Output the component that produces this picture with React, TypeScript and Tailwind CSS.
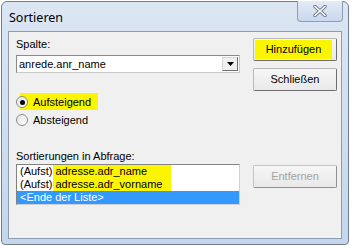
import React from "react";

function Btn({ label, disabled, mark }: { label: string; disabled?: boolean; mark?: boolean }) {
  return (
    <div
      className={`h-[23px] w-[84px] flex rounded-[2px] border ${
        disabled
          ? "border-[#c4c4c4] border-r-[#8f8f8f] border-b-[#8f8f8f] text-[#a3a3a3]"
          : "border-[#b8b8b8] border-r-[#6e6e6e] border-b-[#6e6e6e] text-black"
      } bg-gradient-to-b from-[#f6f6f6] to-[#e9e9e9]`}
    >
      {mark ? (
        <div className="ml-[1px] mr-[4px] my-[1px] flex-1 bg-[#fbf500] flex items-center justify-center">{label}</div>
      ) : (
        <div className="flex-1 flex items-center justify-center">{label}</div>
      )}
    </div>
  );
}

function Radio({ label, checked }: { label: string; checked?: boolean }) {
  return (
    <div className="relative h-[18px] flex items-center">
      {checked && <div className="absolute left-[4px] top-0 h-[17px] w-[78px] bg-[#fbf500]" />}
      <span className="relative w-[12px] h-[12px] rounded-full border border-[#8a8a8a] bg-gradient-to-br from-[#e4e4e4] to-white flex items-center justify-center">
        {checked && <span className="w-[5px] h-[5px] rounded-full bg-black" />}
      </span>
      <span className="relative ml-[5px]">{label}</span>
    </div>
  );
}

export default function App() {
  return (
    <div className="w-[355px] h-[246px] bg-white pl-[1px] pt-[1px] text-[11px] leading-[13px] text-black" style={{ fontFamily: '"Liberation Sans", Arial, sans-serif' }}>
      <div className="w-[348px] h-[244px] flex flex-col rounded-t-[6px] rounded-b-[4px] border border-[#6f7e92] bg-gradient-to-b from-[#dce6f3] to-[#c5d6eb]">
        {/* Title bar */}
        <div className="h-[29px] flex justify-between">
          <span className="ml-[7px] mt-[8px] text-[12.5px] leading-[16px] text-black" style={{ fontFamily: '"Noto Sans", "Open Sans", sans-serif' }}>Sortieren</span>
          <div className="mr-[5px] -mt-[1px] w-[46px] h-[21px] rounded-b-[4px] border border-t-0 border-[#8d9db3] bg-gradient-to-b from-[#e3ebf6] to-[#c9d8ec] flex items-center justify-center">
            <svg width="14" height="12" viewBox="0 0 14 12">
              <path d="M2 1.5 L12 10.5 M12 1.5 L2 10.5" stroke="#6b7a8e" strokeWidth="3.4" strokeLinecap="round" />
              <path d="M2 1.5 L12 10.5 M12 1.5 L2 10.5" stroke="#ffffff" strokeWidth="1.6" strokeLinecap="round" />
            </svg>
          </div>
        </div>

        {/* Client area */}
        <div className="mx-[6px] mb-[5px] flex-1 border border-[#8e9cb0] bg-[#f0f0f0] flex">
          <div className="ml-[7px] w-[224px] flex flex-col">
            <div className="mt-[6px]">Spalte:</div>
            <div className="mt-[4px] h-[18px] flex border border-[#8a8a8a] border-b-[#c8c8c8] border-r-[#c8c8c8] bg-white">
              <div className="flex-1 pl-[2px] flex items-center">anrede.anr_name</div>
              <div className="w-[16px] m-[1px] border border-[#d6d6d6] border-r-[#6e6e6e] border-b-[#6e6e6e] bg-[#f0f0f0] flex items-center justify-center">
                <svg width="7" height="4" viewBox="0 0 7 4">
                  <path d="M0 0 H7 L3.5 4 Z" fill="#000" />
                </svg>
              </div>
            </div>
            <div className="mt-[20px]">
              <Radio label="Aufsteigend" checked />
              <Radio label="Absteigend" />
            </div>
            <div className="mt-[21px]">Sortierungen in Abfrage:</div>
            <div className="mt-[1px] h-[41px] border border-[#828282] border-b-[#d0d0d0] border-r-[#d0d0d0] bg-white flex flex-col">
              <div className="h-[13px] flex items-center pl-[3px] whitespace-nowrap">
                (Aufst)
                <span className="ml-[1px] inline-block w-[118px] h-[13px] bg-[#fbf500] pl-[2px]">adresse.adr_name</span>
              </div>
              <div className="h-[13px] flex items-center pl-[3px] whitespace-nowrap">
                (Aufst)
                <span className="ml-[1px] inline-block w-[118px] h-[13px] bg-[#fbf500] pl-[2px]">adresse.adr_vorname</span>
              </div>
              <div className="h-[13px] flex items-center pl-[3px] bg-[#3399ff] text-white">&lt;Ende der Liste&gt;</div>
            </div>
          </div>

          <div className="ml-[13px] flex flex-col">
            <div className="mt-[6px]">
              <Btn label="Hinzufügen" mark />
            </div>
            <div className="mt-[7px]">
              <Btn label="Schließen" />
            </div>
            <div className="mt-[74px]">
              <Btn label="Entfernen" disabled />
            </div>
          </div>
        </div>
      </div>
    </div>
  );
}
